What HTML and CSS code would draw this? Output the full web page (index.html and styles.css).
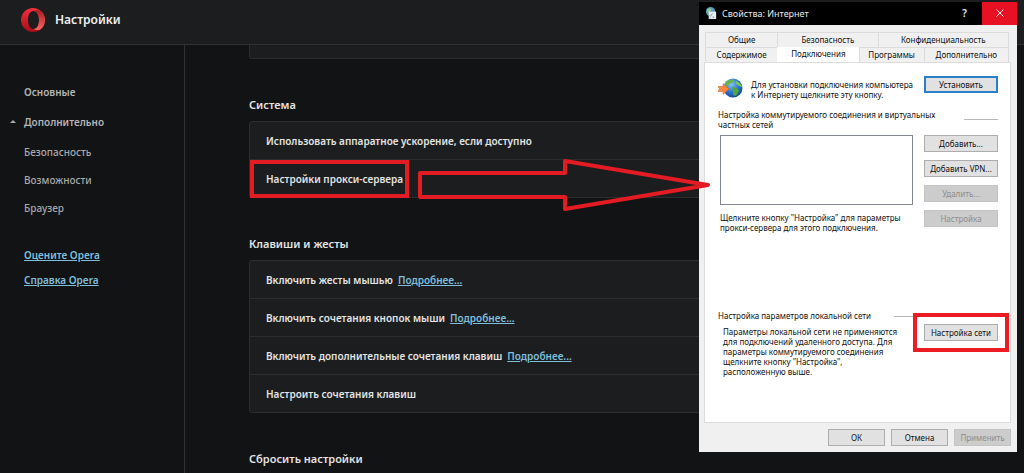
FILE: index.html
```html
<!DOCTYPE html>
<html lang="ru">
<head>
<meta charset="utf-8">
<title>Настройки</title>
<link rel="stylesheet" href="styles.css">
</head>
<body>
<header class="topbar">
  <svg class="logo" viewBox="0 0 26 26" aria-hidden="true">
    <defs>
      <linearGradient id="ring" x1="0" y1="0" x2="0" y2="1">
        <stop offset="0" stop-color="#f4303c"/>
        <stop offset="1" stop-color="#a80c18"/>
      </linearGradient>
      <linearGradient id="side" x1="0" y1="0" x2="0" y2="1">
        <stop offset="0" stop-color="#a81c24"/>
        <stop offset="1" stop-color="#f8685c"/>
      </linearGradient>
    </defs>
    <path fill="url(#ring)" fill-rule="evenodd" d="M13 1A12 12 0 1 0 13 25A12 12 0 1 0 13 1ZM13.500 4C17 4 19 8 19 13C19 18 17 22 13.500 22C10 22 8 18 8 13C8 8 10 4 13.500 4Z"/>
    <path fill="url(#side)" d="M13.500 4C17 2 20 3 21.500 4.500A12 12 0 0 1 21.500 21.500C20 23 17 24 13.500 22C17 22 19 18 19 13C19 8 17 4 13.500 4Z"/>
  </svg>
  <h1 class="title">Настройки</h1>
</header>
<div class="layout">
  <nav class="sidebar">
    <a class="nav-item strong" href="#basic">Основные</a>
    <button class="nav-item strong toggle" type="button">
      <svg class="caret" viewBox="0 0 6 4" aria-hidden="true"><path d="M0 4L3 1L6 4Z"/></svg>Дополнительно
    </button>
    <a class="nav-item sub" href="#security">Безопасность</a>
    <a class="nav-item sub" href="#features">Возможности</a>
    <a class="nav-item sub" href="#browser">Браузер</a>
    <div class="nav-links">
      <a class="link" href="#rate">Оцените Opera</a>
      <a class="link" href="#help">Справка Opera</a>
    </div>
  </nav>
  <main class="content">
    <div class="card card-tail"></div>
    <h2 class="section-title">Система</h2>
    <div class="card">
      <div class="row">Использовать аппаратное ускорение, если доступно</div>
      <div class="row"><span class="marked">Настройки прокси-сервера</span></div>
    </div>
    <h2 class="section-title">Клавиши и жесты</h2>
    <div class="card">
      <div class="row">Включить жесты мышью <a class="link" href="#g1">Подробнее...</a></div>
      <div class="row">Включить сочетания кнопок мыши <a class="link" href="#g2">Подробнее...</a></div>
      <div class="row">Включить дополнительные сочетания клавиш <a class="link" href="#g3">Подробнее...</a></div>
      <div class="row">Настроить сочетания клавиш</div>
    </div>
    <h2 class="section-title">Сбросить настройки</h2>
  </main>
</div>

<section class="dialog" role="dialog" aria-labelledby="dlg-title">
  <div class="dlg-bar">
    <svg class="dlg-icon" viewBox="0 0 14 14" aria-hidden="true">
      <circle cx="6" cy="5" r="5" fill="#5b9bb5"/>
      <path d="M2 3L5 1L7 3L5 6L3 6Z" fill="#8fc79a"/>
      <path d="M4 5H12V13H4Z" fill="#e6eef2"/>
      <path d="M5 9L6 10L8 7M5 12L6 12M9 10V12" stroke="#7c9cac" fill="none"/>
    </svg>
    <span class="dlg-title" id="dlg-title">Свойства: Интернет</span>
    <button class="bar-btn" type="button">?</button>
    <button class="bar-btn close" type="button" aria-label="Закрыть">
      <svg class="cross" viewBox="0 0 8 8" aria-hidden="true"><path d="M0.5 0.5L7.5 7.5M7.5 0.5L0.5 7.5"/></svg>
    </button>
  </div>
  <div class="dlg-body">
    <div class="tabs" role="tablist">
      <div class="tab-row upper">
        <button class="tab" type="button" role="tab">Общие</button>
        <button class="tab" type="button" role="tab">Безопасность</button>
        <button class="tab" type="button" role="tab">Конфиденциальность</button>
      </div>
      <div class="tab-row lower">
        <button class="tab" type="button" role="tab">Содержимое</button>
        <button class="tab active" type="button" role="tab" aria-selected="true">Подключения</button>
        <button class="tab" type="button" role="tab">Программы</button>
        <button class="tab" type="button" role="tab">Дополнительно</button>
      </div>
    </div>
    <div class="panel">
      <div class="split setup">
        <div class="setup-text">
          <svg class="globe" viewBox="0 0 26 22" aria-hidden="true">
            <defs>
              <radialGradient id="sea" cx="0.4" cy="0.3" r="0.8">
                <stop offset="0" stop-color="#8cc4f4"/>
                <stop offset="0.5" stop-color="#2f78d0"/>
                <stop offset="1" stop-color="#0c3a8c"/>
              </radialGradient>
            </defs>
            <circle cx="15" cy="10" r="9.500" fill="url(#sea)"/>
            <path d="M8 4C11 1 14 1 16 2L14 5L11 6L10 8L7 8Z" fill="#62b848"/>
            <path d="M18 3C21 4 24 7 24 9L21 8L18 6Z" fill="#78c850"/>
            <path d="M14 9L19 10L21 13L18 18L15 17L15 13Z" fill="#4ca83c"/>
            <path d="M0 8.500H5V5.500L11 11L5 16.500V13.500H0L1.500 11Z" fill="#f58a40" stroke="#d25a1c" stroke-width="0.500"/>
          </svg>
          <p>Для установки подключения компьютера<br>к Интернету щелкните эту кнопку.</p>
        </div>
        <button class="btn primary" type="button">Установить</button>
      </div>
      <div class="group-head dial">
        <h3 class="group-title">Настройка коммутируемого соединения и виртуальных<br>частных сетей</h3>
        <span class="rule"></span>
      </div>
      <div class="split dial-grid">
        <div class="dial-left">
          <div class="listbox" role="listbox" tabindex="0"></div>
          <p>Щелкните кнопку "Настройка" для параметры<br>прокси-сервера для этого подключения.</p>
        </div>
        <div class="btn-col">
          <button class="btn" type="button">Добавить...</button>
          <button class="btn" type="button">Добавить VPN...</button>
          <button class="btn" type="button" disabled>Удалить...</button>
          <button class="btn" type="button" disabled>Настройка</button>
        </div>
      </div>
      <div class="group-head lan">
        <h3 class="group-title">Настройка параметров локальной сети</h3>
        <span class="rule wide"></span>
      </div>
      <div class="split lan-row">
        <p>Параметры локальной сети не применяются<br>для подключений удаленного доступа. Для<br>параметры коммутируемого соединения<br>щелкните кнопку "Настройка",<br>расположенную выше.</p>
        <button class="btn marked-btn" type="button">Настройка сети</button>
      </div>
    </div>
    <div class="dlg-footer">
      <button class="btn" type="button">ОК</button>
      <button class="btn" type="button">Отмена</button>
      <button class="btn" type="button" disabled>Применить</button>
    </div>
  </div>
</section>

<svg class="arrow" viewBox="0 0 298 54" aria-hidden="true">
  <path d="M4 16H149V4L292 28L149 52V40H4Z"/>
</svg>
</body>
</html>
```
FILE: styles.css
```css
* { box-sizing: border-box; }
html, body { margin: 0; height: 100%; }
body {
  display: flex;
  flex-direction: column;
  position: relative;
  overflow: hidden;
  background: #111315;
  color: #e4e4e4;
  font: 600 10px/16px "Noto Sans", "Open Sans", sans-serif;
}
h1, h2, h3, p { margin: 0; }
button { font: inherit; color: inherit; padding: 0; margin: 0; border: 0; background: none; }
.topbar {
  flex: none;
  display: flex;
  align-items: center;
  gap: 9px;
  height: 45px;
  padding: 0 20px 4px;
  background: #1b1d1f;
  border-bottom: 1px solid #303234;
}
.logo { width: 26px; height: 26px; }
.title { font-size: 12px; line-height: 20px; font-weight: 600; color: #f0f0f0; }
.layout { flex: 1; display: grid; grid-template-columns: 185px 1fr; min-height: 0; }
.sidebar {
  display: flex;
  flex-direction: column;
  align-items: flex-start;
  padding: 39px 0 0 24px;
  border-right: 1px solid #303234;
}
.nav-item { position: relative; color: #a8a9aa; text-decoration: none; line-height: 16px; }
.nav-item.strong { color: #b4b5b6; margin-bottom: 14px; font-weight: 600; }
.nav-item.sub { margin-bottom: 12px; font-weight: 500; }
.caret { position: absolute; left: -14px; top: 5px; width: 6px; height: 4px; fill: #a8a9aa; }
.nav-links { display: flex; flex-direction: column; gap: 9px; padding-top: 19px; }
.link { color: #7fbfdc; }
.content { padding-left: 64px; padding-right: 64px; overflow: hidden; }
.card { background: #1b1d1f; border: 1px solid #2b2d2f; border-radius: 3px; }
.card-tail { height: 14px; border-top: 0; border-radius: 0 0 3px 3px; }
.section-title { font-size: 11px; line-height: 18px; font-weight: 600; padding: 37px 0 7px; }
.row { display: flex; align-items: center; gap: 5px; height: 37px; padding: 0 16px; }
.row + .row { height: 38px; border-top: 1px solid #2b2d2f; }
.marked { margin-left: -16px; padding: 7px 2px 7px 12px; border: 4px solid #e31b23; }

.dialog {
  position: absolute;
  top: 2px;
  right: 7px;
  width: 318px;
  background: #f0f0f0;
  color: #101010;
  font: 400 8px/10px "Noto Sans", "Open Sans", sans-serif;
}
.dlg-bar { display: flex; align-items: stretch; height: 23px; background: #000; color: #e8e8e8; }
.dlg-icon { width: 13px; height: 13px; margin: 5px 4px 0 6px; }
.dlg-title { flex: 1; font-size: 9px; line-height: 23px; }
.bar-btn { width: 35px; font-size: 10px; font-weight: 600; line-height: 23px; text-align: center; }
.close { background: #e81123; }
.cross { width: 8px; height: 8px; fill: none; stroke: #fff; }
.dlg-body { padding: 7px 6px 6px 5px; }
.tabs { padding: 0 2px 0 1px; }
.tab-row { display: grid; }
.upper { grid-template-columns: 72fr 100fr 131fr; }
.lower { grid-template-columns: 72fr 81fr 65fr 85fr; }
.tab { height: 15px; border: 1px solid #dcdcdc; border-bottom: 0; border-right-width: 0; }
.tab:last-child { border-right-width: 1px; }
.tab.active { background: #fff; border-color: #fff; padding-bottom: 2px; }
.panel { height: 361px; padding: 13px 12px 0 13px; background: #fff; border: 1px solid #dcdcdc; }
.split { display: flex; justify-content: space-between; align-items: flex-start; }
.setup-text { display: flex; gap: 7px; padding-top: 4px; }
.globe { flex: none; width: 26px; height: 22px; margin-top: -2px; }
.btn { flex: none; width: 74px; height: 17px; background: #e1e1e1; border: 1px solid #adadad; white-space: nowrap; }
.btn.primary { border: 2px solid #2a7fc9; }
.btn:disabled { background: #ccc; border-color: #c4c4c4; color: #8c8c8c; }
.group-head { display: flex; justify-content: space-between; }
.group-title { font: inherit; white-space: nowrap; }
.dial { padding-top: 10px; }
.rule { width: 34px; height: 1px; margin-top: 9px; background: #b8b8b8; }
.rule.wide { width: 104px; margin-top: 5px; }
.dial-grid { padding: 5px 0 0 2px; }
.listbox { width: 193px; height: 70px; border: 1px solid #828790; margin-bottom: 8px; }
.btn-col { display: flex; flex-direction: column; gap: 8px; }
.lan { padding-top: 78px; }
.lan-row { padding: 3px 0 0 5px; }
.lan-row p { padding-top: 3px; }
.marked-btn { outline: 4px solid #ec1c24; outline-offset: 7px; }
.dlg-footer { display: flex; justify-content: flex-end; gap: 6px; padding-top: 6px; }
.dlg-footer .btn { width: 57px; }
.arrow { position: absolute; left: 416px; top: 157px; width: 298px; height: 54px; fill: none; stroke: #e31b23; stroke-width: 4; stroke-linejoin: round; }
```
